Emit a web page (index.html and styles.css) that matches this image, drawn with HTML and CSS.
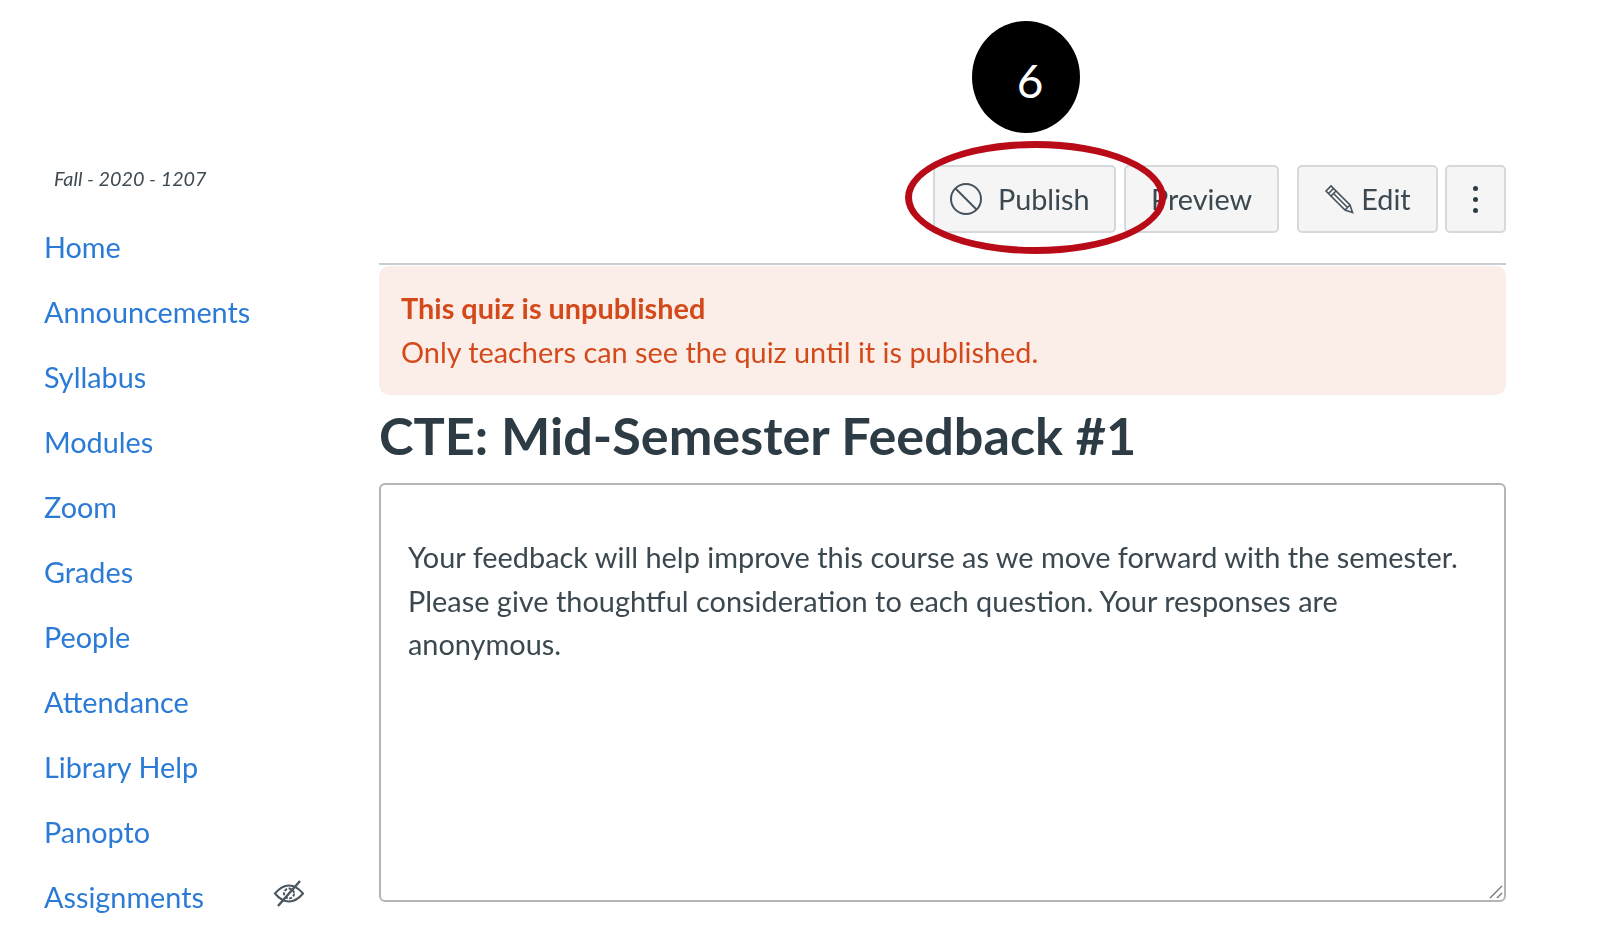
FILE: index.html

```html
<!DOCTYPE html>
<html lang="en">
<head>
    <meta charset="UTF-8">
    <meta name="viewport" content="width=device-width, initial-scale=1.0">
    <title>CTE: Mid-Semester Feedback #1</title>
    <link rel="stylesheet" href="styles.css">
</head>
<body>

<div class="page">
    <nav class="sidebar">
        <p class="term">Fall - 2020 - 1207</p>
        <ul class="nav-list">
            <li><a href="#">Home</a></li>
            <li><a href="#">Announcements</a></li>
            <li><a href="#">Syllabus</a></li>
            <li><a href="#">Modules</a></li>
            <li><a href="#">Zoom</a></li>
            <li><a href="#">Grades</a></li>
            <li><a href="#">People</a></li>
            <li><a href="#">Attendance</a></li>
            <li><a href="#">Library Help</a></li>
            <li><a href="#">Panopto</a></li>
            <li class="nav-hidden">
                <a href="#">Assignments</a>
                <svg class="eye-icon" viewBox="0 0 32 28" fill="none" stroke="#4a5660" stroke-width="2">
                    <path d="M2 14.5C7 8.5 11 6.5 16 6.5s9 2 14 8c-5 6-9 8-14 8s-9-2-14-8z"/>
                    <circle cx="16" cy="14.5" r="5" stroke-dasharray="3 1.5"/>
                    <path d="M5 27L27 2" stroke-width="2.4"/>
                </svg>
            </li>
        </ul>
    </nav>

    <main class="content">
        <div class="toolbar">
            <button class="btn btn-publish">
                <svg class="ban-icon" viewBox="0 0 34 34" fill="none" stroke="#46535e" stroke-width="2">
                    <circle cx="17" cy="17" r="15"/>
                    <path d="M6.5 6.5L27.5 27.5"/>
                </svg>
                Publish
            </button>
            <button class="btn btn-preview">Preview</button>
            <button class="btn btn-edit">
                <svg class="pencil-icon" viewBox="0 0 30 30" fill="none" stroke="#46535e" stroke-width="1.6">
                    <path d="M2 7L7 2L26 21L28.5 28.5L21 26z"/>
                    <path d="M4.5 9.5L9.5 4.5M7 12L12 7M21 26L26 21M10 10L23.5 23.5"/>
                </svg>
                Edit
            </button>
            <button class="btn btn-more" aria-label="More">
                <span class="dot"></span>
                <span class="dot"></span>
                <span class="dot"></span>
            </button>
        </div>

        <div class="alert">
            <strong>This quiz is unpublished</strong>
            <span>Only teachers can see the quiz until it is published.</span>
        </div>

        <h1>CTE: Mid-Semester Feedback #1</h1>

        <div class="description">
            <p>Your feedback will help improve this course as we move forward with the semester. Please give thoughtful consideration to each question. Your responses are anonymous.</p>
            <svg class="resize-grip" viewBox="0 0 14 14" stroke="#777" stroke-width="1.4">
                <path d="M1 13L13 1M8 13L13 8"/>
            </svg>
        </div>
    </main>
</div>

<div class="step-badge">6</div>
<div class="step-oval"></div>

</body>
</html>
```

FILE: styles.css

```css
body {
    margin: 0;
    background-color: #ffffff;
    font-family: 'Lato', 'Liberation Sans', sans-serif;
    color: #2d3b45;
    height: 940px;
    overflow: hidden;
}
.page {
    display: flex;
    width: 1506px;
    filter: blur(0.4px);
}
.sidebar {
    width: 335px;
    flex: none;
    padding: 167px 0 0 44px;
}
.term {
    margin: 0 0 0 10px;
    font-size: 19.8px;
    line-height: 22px;
    font-style: italic;
    color: #3f4a52;
}
.nav-list {
    list-style: none;
    margin: 38px 0 0;
    padding: 0;
}
.nav-list li {
    height: 65px;
    font-size: 28.8px;
    line-height: 40px;
}
.nav-list a {
    color: #2b7bd6;
    text-decoration: none;
}
.nav-hidden {
    display: flex;
    justify-content: space-between;
    align-items: flex-start;
}
.eye-icon {
    width: 32px;
    height: 28px;
    margin-right: 74px;
    margin-top: 2px;
}
.content {
    flex: 1;
    padding-top: 165px;
}
.toolbar {
    display: flex;
    justify-content: flex-end;
    height: 98px;
    border-bottom: 2px solid #c7cdd1;
}
.btn {
    height: 68px;
    display: flex;
    align-items: center;
    justify-content: center;
    background-color: #f5f5f5;
    border: 2px solid #d5d9dc;
    border-radius: 5px;
    box-sizing: border-box;
    font-family: inherit;
    font-size: 28.8px;
    color: #3b4850;
    padding: 0;
}
.btn-publish {
    width: 183px;
    justify-content: flex-start;
    gap: 15px;
    margin-right: 8px;
    padding-left: 14px;
}
.btn-preview {
    width: 155px;
    margin-right: 18px;
}
.btn-edit {
    width: 141px;
    gap: 7px;
    margin-right: 7px;
}
.btn-more {
    width: 61px;
    flex-direction: column;
    gap: 6px;
}
.ban-icon {
    width: 34px;
    height: 34px;
}
.pencil-icon {
    width: 30px;
    height: 30px;
}
.dot {
    width: 5px;
    height: 5px;
    border-radius: 50%;
    background-color: #2d3b45;
}
.alert {
    margin-top: 1px;
    height: 129px;
    box-sizing: border-box;
    padding: 20px 22px 0;
    background-color: #fbeee9;
    border-radius: 10px;
    color: #d4491a;
    font-size: 28.85px;
    line-height: 44px;
}
.alert strong {
    display: block;
    font-weight: 700;
}
.alert span {
    display: block;
}
h1 {
    margin: 6px 0 0;
    font-size: 52.2px;
    line-height: 68px;
    font-weight: 700;
    color: #2d3b45;
}
.description {
    position: relative;
    margin-top: 14px;
    height: 419px;
    box-sizing: border-box;
    border: 2px solid #b5b5b5;
    border-radius: 6px;
    padding: 50px 26px 0 27px;
}
.description p {
    margin: 0;
    font-size: 28.9px;
    line-height: 43.5px;
    color: #3b4850;
}
.resize-grip {
    position: absolute;
    right: 1px;
    bottom: 1px;
    width: 14px;
    height: 14px;
}
.step-badge {
    position: absolute;
    left: 972px;
    top: 21px;
    width: 108px;
    height: 112px;
    border-radius: 50%;
    background-color: #000000;
    color: #ffffff;
    font-size: 46px;
    line-height: 120px;
    text-align: center;
    text-indent: 8px;
}
.step-oval {
    position: absolute;
    left: 905px;
    top: 141px;
    width: 261px;
    height: 113px;
    box-sizing: border-box;
    border: 7px solid #b80b17;
    border-radius: 50%;
}
```
